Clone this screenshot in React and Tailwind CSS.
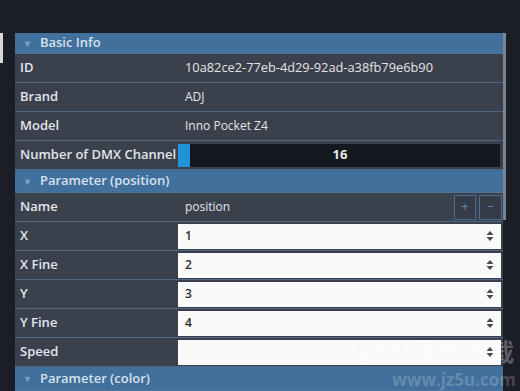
const font = { fontFamily: '"Open Sans", "Liberation Sans", sans-serif' };

function Header({ title, h }) {
  return (
    <div className={`flex ${h} items-center gap-[8px] border-b border-[#4f7499] bg-[#41709c] pl-[8px]`}>
      <span className="text-[9px] leading-none text-[#7fa3c4]">▼</span>
      <span className="text-[13px] font-semibold text-[#d6e2ee]">{title}</span>
    </div>
  );
}

function Row({ label, children }) {
  return (
    <div className="flex h-[29px] border-b border-[#4d6886] bg-[#3b404d]">
      <div className="flex w-[163px] shrink-0 items-center pl-[5px] text-[13px] font-semibold text-[#e2e6ec]">
        {label}
      </div>
      <div className="flex flex-1 items-center">{children}</div>
    </div>
  );
}

function Stepper() {
  return (
    <svg width="8" height="12" viewBox="0 0 8 12" className="shrink-0">
      <path d="M4 1 L7.5 5 L0.5 5 Z" fill="#4a4a4a" />
      <path d="M4 11 L7.5 7 L0.5 7 Z" fill="#4a4a4a" />
    </svg>
  );
}

function NumberInput({ value }) {
  return (
    <div className="mr-[2px] flex h-[25px] flex-1 items-center justify-between bg-[#fafafa] pl-[7px] pr-[7px]">
      <span className="text-[12px] font-semibold text-[#2a2a2a]">{value}</span>
      <Stepper />
    </div>
  );
}

export default function App() {
  return (
    <div className="relative flex h-[391px] w-[520px] overflow-hidden bg-[#1b1e26]" style={font}>
      <div className="flex w-[15px] shrink-0 flex-col">
        <div className="mt-[33px] h-[30px] w-[3px] bg-[#d8d8d8]" />
      </div>

      <div className="mt-[33px] flex w-[488px] shrink-0 flex-col">
        <Header title="Basic Info" h="h-[21px]" />
        <Row label="ID">
          <span className="pl-[7px] text-[12.8px] text-[#e4e4e4]">10a82ce2-77eb-4d29-92ad-a38fb79e6b90</span>
        </Row>
        <Row label="Brand">
          <span className="pl-[7px] text-[12px] text-[#e4e4e4]">ADJ</span>
        </Row>
        <Row label="Model">
          <span className="pl-[7px] text-[12px] text-[#e4e4e4]">Inno Pocket Z4</span>
        </Row>
        <Row label="Number of DMX Channel">
          <div className="mr-[3px] flex h-[23px] flex-1">
            <div className="w-[12px] bg-[#1f92d8]" />
            <div className="flex flex-1 items-center justify-center pr-[10px] bg-[#141920] text-[13px] font-bold text-[#e8e8e8]">
              16
            </div>
          </div>
        </Row>
        <Header title="Parameter (position)" h="h-[23px]" />
        <Row label="Name">
          <div className="flex flex-1 items-center justify-between">
            <span className="pl-[7px] text-[12px] text-[#e4e4e4]">position</span>
            <div className="mr-[1px] flex gap-[3px]">
              <div className="flex h-[25px] w-[22px] items-center justify-center border border-[#4c6c90] bg-[#363b48] text-[12px] leading-none text-[#5d8cc2]">
                +
              </div>
              <div className="flex h-[25px] w-[23px] items-center justify-center border border-[#4c6c90] bg-[#363b48] text-[12px] leading-none text-[#5d8cc2]">
                −
              </div>
            </div>
          </div>
        </Row>
        <Row label="X">
          <NumberInput value="1" />
        </Row>
        <Row label="X Fine">
          <NumberInput value="2" />
        </Row>
        <Row label="Y">
          <NumberInput value="3" />
        </Row>
        <Row label="Y Fine">
          <NumberInput value="4" />
        </Row>
        <Row label="Speed">
          <NumberInput value="" />
        </Row>
        <Header title="Parameter (color)" h="h-[24px]" />
      </div>

      <div className="flex flex-1">
        <div className="mt-[33px] h-[187px] w-[3px] bg-[#7b8591]" />
      </div>

      <div className="pointer-events-none absolute bottom-[3px] right-[4px] flex flex-col items-end gap-[8px]">
        <span
          className="text-[24px] font-bold leading-[24px] tracking-[2px] text-white/30"
          style={{ fontFamily: '"Noto Sans CJK SC", sans-serif' }}
        >
          JZ5U绿色下载
        </span>
        <span className="text-[17px] font-bold leading-[17px] text-white/20">www.jz5u.com</span>
      </div>
    </div>
  );
}
